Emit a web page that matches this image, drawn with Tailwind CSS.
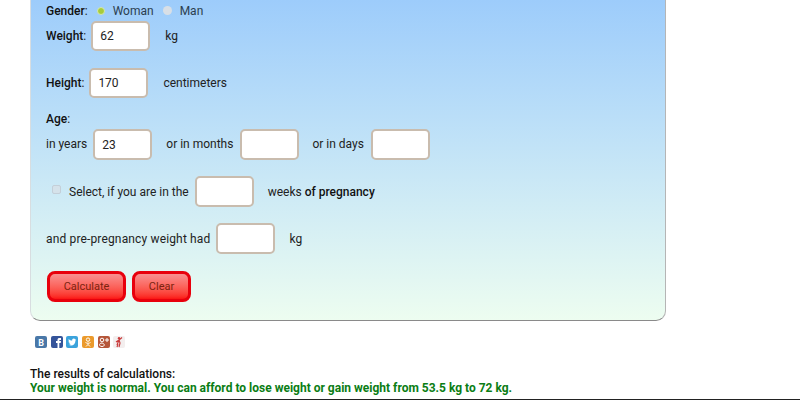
<!DOCTYPE html>
<html><head><meta charset="utf-8"><script src="https://cdn.jsdelivr.net/npm/@tailwindcss/browser@4"></script></head>
<body class="bg-white overflow-hidden">
<div class="h-[400px] overflow-hidden relative font-['Roboto',sans-serif] text-[12px] text-[#222]">
  <div class="ml-[30px] w-[636px] h-[321px] rounded-b-[10px] border-r border-b border-l border-r-[#b5b5b5] border-l-[#d8dde0] border-b-[#8a8a8a] bg-gradient-to-b from-[#9dccfb] to-[#edfdf0] pl-[15px]">
    <div class="h-[21px] flex items-center">
      <b class="font-medium text-[#111]">Gender</b><span>:</span>
      <span class="ml-[9px] w-[8px] h-[8px] rounded-full bg-[#a6cc3c] border border-[#d6e8b0]"></span>
      <span class="ml-[8px] text-[#2c3e50]">Woman</span>
      <span class="ml-[9px] w-[9px] h-[9px] rounded-full bg-[#d8dfe6]"></span>
      <span class="ml-[8px] text-[#2c3e50]">Man</span>
    </div>
    <div class="flex items-center h-[30px]">
      <b class="font-medium text-[#111]">Weight</b><span>:</span>
      <div class="ml-[5px] w-[59px] h-[30px] rounded-[5px] border-2 border-[#c9bcae] bg-white pl-[7px] flex items-center">62</div>
      <span class="ml-[15px]">kg</span>
    </div>
    <div class="flex items-center h-[30px] mt-[17px]">
      <b class="font-medium text-[#111]">Height</b><span>:</span>
      <div class="ml-[5px] w-[59px] h-[30px] rounded-[5px] border-2 border-[#c9bcae] bg-white pl-[7px] flex items-center">170</div>
      <span class="ml-[15px]">centimeters</span>
    </div>
    <div class="h-[14px] mt-[14px] leading-[14px]"><b class="font-medium text-[#111]">Age</b>:</div>
    <div class="flex items-center h-[31px] mt-[3px]">
      <span class="-translate-y-[1px]">in years</span>
      <div class="ml-[6px] w-[59px] h-[31px] rounded-[5px] border-2 border-[#c9bcae] bg-white pl-[7px] flex items-center">23</div>
      <span class="ml-[14px] -translate-y-[1px]">or in months</span>
      <div class="ml-[7px] w-[59px] h-[31px] rounded-[5px] border-2 border-[#c9bcae] bg-white"></div>
      <span class="ml-[13px] -translate-y-[1px]">or in days</span>
      <div class="ml-[7px] w-[59px] h-[31px] rounded-[5px] border-2 border-[#c9bcae] bg-white"></div>
    </div>
    <div class="flex items-center h-[31px] mt-[16px]">
      <span class="ml-[6px] w-[9px] h-[9px] rounded-[2px] border border-[#c4cfd8] bg-[#d5e2ea] -translate-y-[2px]"></span>
      <span class="ml-[8px]">Select, if you are in the</span>
      <div class="ml-[6px] w-[59px] h-[31px] rounded-[5px] border-2 border-[#c9bcae] bg-white"></div>
      <span class="ml-[14px]">weeks <b class="font-medium text-[#111]">of pregnancy</b></span>
    </div>
    <div class="flex items-center h-[31px] mt-[16px]">
      <span class="tracking-[0.15px]">and pre-pregnancy weight had</span>
      <div class="ml-[6px] w-[59px] h-[31px] rounded-[5px] border-2 border-[#c9bcae] bg-white"></div>
      <span class="ml-[14px]">kg</span>
    </div>
    <div class="flex gap-[6px] mt-[17px] ml-[1px]">
      <button class="w-[79px] h-[31px] rounded-[8px] border-[3px] border-[#e8000c] bg-gradient-to-b from-[#f89090] to-[#fb1212] text-[#7a2410] text-[11px] pt-[2px] font-['Roboto',sans-serif]">Calculate</button>
      <button class="w-[59px] h-[31px] rounded-[8px] border-[3px] border-[#e8000c] bg-gradient-to-b from-[#f89090] to-[#fb1212] text-[#7a2410] text-[11px] pt-[2px] font-['Roboto',sans-serif]">Clear</button>
    </div>
  </div>
  <div class="flex gap-[3.7px] ml-[35px] mt-[15px]">
    <svg width="12" height="12" viewBox="0 0 12 12"><rect width="12" height="12" rx="2" fill="#4a78a8"/><text x="6" y="9.500" font-size="9" font-weight="700" font-family="Roboto" fill="#fff" text-anchor="middle">B</text></svg>
    <svg width="12" height="12" viewBox="0 0 12 12"><rect width="12" height="12" rx="2" fill="#35549a"/><path d="M6.500 12V7H5V5h1.500V3.800C6.500 2.500 7.300 2 8.500 2H10v2H8.800c-.4 0-.5.200-.5.500V5H10l-.3 2H8.300v5z" fill="#fff"/></svg>
    <svg width="12" height="12" viewBox="0 0 12 12"><rect width="12" height="12" rx="2" fill="#3ba3dc"/><path d="M2.500 8.800c3.500 1.800 7-.2 7-4.400l.8-1-1 .2-.8-.8c-1.300-.6-2.600.4-2.300 1.800-1.400 0-2.600-.6-3.400-1.600-.5 1-.2 1.900.5 2.500l-.8-.2c0 .9.600 1.600 1.400 1.800h-.8c.3.700.9 1.100 1.600 1.200-.7.500-1.300.6-2.200.5z" fill="#fff"/></svg>
    <svg width="12" height="12" viewBox="0 0 12 12"><rect width="12" height="12" rx="2" fill="#eb9a2c"/><circle cx="6" cy="3.600" r="1.700" fill="none" stroke="#fff" stroke-width="1"/><path d="M3.500 6.500c1.500 1 3.500 1 5 0M6 7.500v1M4 10.500l2-2 2 2" fill="none" stroke="#fff" stroke-width="1"/></svg>
    <svg width="12" height="12" viewBox="0 0 12 12"><rect width="12" height="12" rx="2" fill="#b5573a"/><circle cx="4" cy="4" r="1.800" fill="none" stroke="#fff" stroke-width="1"/><path d="M4 7c-1.500 0-2.500.8-2.500 1.800S2.500 10.500 4 10.500s2.300-.7 2.300-1.700S5 7.500 4 7zM9 2v4M7 4h4" fill="none" stroke="#fff" stroke-width="1"/></svg>
    <svg width="12" height="12" viewBox="0 0 12 12"><rect width="12" height="12" rx="2" fill="#f3eeee"/><circle cx="6" cy="2.200" r="1.200" fill="#c93c3c"/><path d="M6 4 4 9M6 4l1 3-1 4M6 4 3 6M6 4l3-2.500M5 8l-1 3" fill="none" stroke="#c93c3c" stroke-width="1.200"/></svg>
  </div>
  <div class="ml-[30px] mt-[19px] text-[12px] leading-[14px] font-medium text-[#111]">The results of calculations:</div>
  <div class="ml-[30px] text-[12px] leading-[14px] font-bold text-[#0a7d14]">Your weight is normal. You can afford to lose weight or gain weight from 53.5 kg to 72 kg.</div>
  <div class="absolute left-0 right-0 bottom-0 h-[1px] bg-[#222]"></div>
</div>
</body></html>
